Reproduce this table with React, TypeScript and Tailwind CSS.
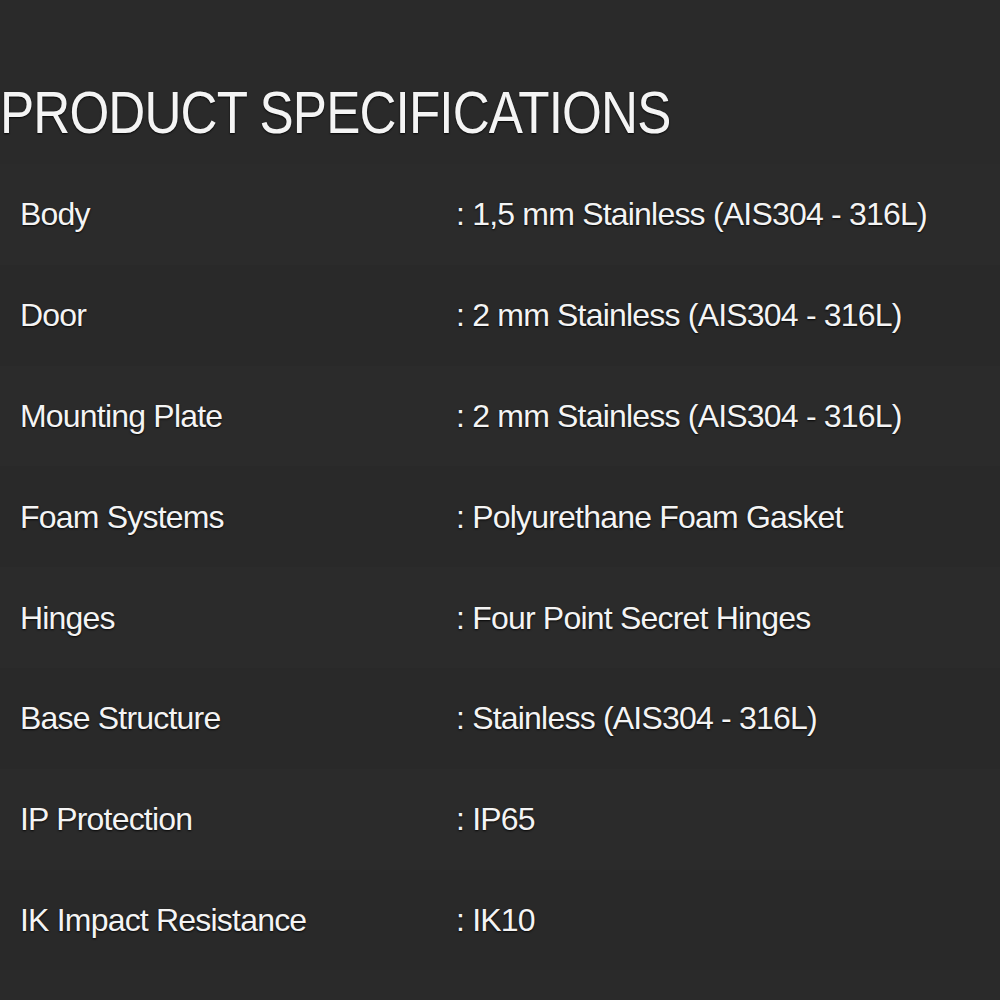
import React from "react";

const rows: [string, string][] = [
  ["Body", ": 1,5 mm Stainless (AIS304 - 316L)"],
  ["Door", ": 2 mm Stainless (AIS304 - 316L)"],
  ["Mounting Plate", ": 2 mm Stainless (AIS304 - 316L)"],
  ["Foam Systems", ": Polyurethane Foam Gasket"],
  ["Hinges", ": Four Point Secret Hinges"],
  ["Base Structure", ": Stainless (AIS304 - 316L)"],
  ["IP Protection", ": IP65"],
  ["IK Impact Resistance", ": IK10"],
];

export default function App() {
  return (
    <div
      className="w-[1000px] h-[1000px] overflow-hidden bg-[#2a2a2a] text-[#f4f4f4] [text-shadow:0_1px_2px_rgba(0,0,0,0.85)]"
      style={{ fontFamily: '"Liberation Sans", Arial, sans-serif' }}
    >
      <div className="pt-[84px] h-[164px]">
        <h1 className="text-[59px] leading-none font-normal tracking-[-1px] whitespace-nowrap origin-left scale-x-[0.868] w-max">
          PRODUCT SPECIFICATIONS
        </h1>
      </div>
      <div className="flex flex-col">
        {rows.map(([label, value], i) => (
          <div
            key={label}
            className={
              "flex items-center h-[100.8px] text-[32px] leading-none tracking-[-0.8px] whitespace-nowrap " +
              (i % 2 === 0 ? "bg-[#2b2b2b]" : "bg-[#292929]")
            }
          >
            <div className="w-[456px] pl-[20px]">{label}</div>
            <div>{value}</div>
          </div>
        ))}
      </div>
    </div>
  );
}
